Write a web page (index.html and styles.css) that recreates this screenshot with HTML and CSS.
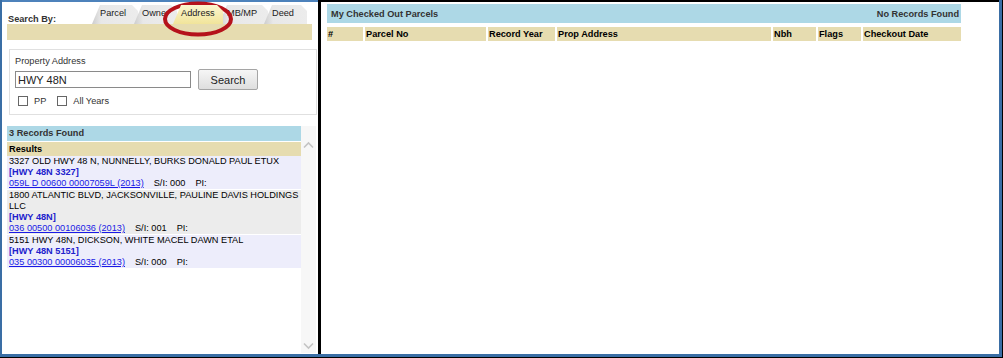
FILE: index.html
```html
<!DOCTYPE html>
<html lang="en">
<head>
    <meta charset="UTF-8">
    <title>Parcel Search</title>
    <link rel="stylesheet" href="styles.css">
</head>
<body>
    <div class="frame">
        <div class="left-panel">
            <div class="search-by">
                <span class="search-label">Search By:</span>
                <div class="tabs">
                    <span class="tab tab-parcel">Parcel</span>
                    <span class="tab tab-owner">Owner</span>
                    <span class="tab tab-address active">Address</span>
                    <span class="tab tab-mbmp">MB/MP</span>
                    <span class="tab tab-deed">Deed</span>
                </div>
            </div>
            <div class="tab-strip"></div>
            <svg class="highlight" width="74" height="38" viewBox="0 0 74 38">
                <ellipse cx="37" cy="19" rx="33" ry="15.5" fill="none" stroke="#b5121b" stroke-width="4"/>
            </svg>

            <div class="search-box">
                <div class="field-label">Property Address</div>
                <div class="search-row">
                    <input type="text" class="address-input" value="HWY 48N">
                    <button class="search-btn">Search</button>
                </div>
                <div class="check-row">
                    <label><input type="checkbox"> PP</label>
                    <label><input type="checkbox"> All Years</label>
                </div>
            </div>

            <div class="results-wrap">
                <div class="results">
                    <div class="count-bar">3 Records Found</div>
                    <div class="results-head">Results</div>
                    <div class="result odd">
                        <div>3327 OLD HWY 48 N, NUNNELLY, BURKS DONALD PAUL ETUX</div>
                        <div class="tag">[HWY 48N 3327]</div>
                        <div><a href="#">059L D 00600 00007059L (2013)</a><span class="meta">S/I: 000</span><span class="meta">PI:</span></div>
                    </div>
                    <div class="result even">
                        <div>1800 ATLANTIC BLVD, JACKSONVILLE, PAULINE DAVIS HOLDINGS LLC</div>
                        <div class="tag">[HWY 48N]</div>
                        <div><a href="#">036 00500 00106036 (2013)</a><span class="meta">S/I: 001</span><span class="meta">PI:</span></div>
                    </div>
                    <div class="result odd">
                        <div>5151 HWY 48N, DICKSON, WHITE MACEL DAWN ETAL</div>
                        <div class="tag">[HWY 48N 5151]</div>
                        <div><a href="#">035 00300 00006035 (2013)</a><span class="meta">S/I: 000</span><span class="meta">PI:</span></div>
                    </div>
                </div>
                <div class="scrollbar">
                    <svg width="11" height="8" viewBox="0 0 11 8"><polyline points="1,6.5 5.5,2 10,6.5" fill="none" stroke="#c4c4c4" stroke-width="1.6"/></svg>
                    <svg width="11" height="8" viewBox="0 0 11 8"><polyline points="1,1.5 5.5,6 10,1.5" fill="none" stroke="#c4c4c4" stroke-width="1.6"/></svg>
                </div>
            </div>
        </div>

        <div class="divider"></div>

        <div class="right-panel">
            <div class="checked-bar">
                <span>My Checked Out Parcels</span>
                <span>No Records Found</span>
            </div>
            <div class="checked-head">
                <span>#</span>
                <span>Parcel No</span>
                <span>Record Year</span>
                <span>Prop Address</span>
                <span>Nbh</span>
                <span>Flags</span>
                <span>Checkout Date</span>
            </div>
        </div>
    </div>
</body>
</html>
```
FILE: styles.css
```css
html {
    background-color: #000;
}
body {
    margin: 0;
    padding: 0;
    font-family: Arial, "Liberation Sans", sans-serif;
    font-size: 9.2px;
    color: #000;
}
.frame {
    width: 1002px;
    height: 357px;
    box-sizing: border-box;
    background-color: #fff;
    border-left: 2px solid #3a6ea5;
    border-right: 3px solid #3a6ea5;
    border-bottom: 3px solid #3a6ea5;
    display: flex;
}
.left-panel {
    position: relative;
    width: 316px;
    border-top: 2px solid #4d82bb;
    display: flex;
    flex-direction: column;
}
.divider {
    width: 3px;
    background-color: #000;
}
.right-panel {
    flex: 1;
    border-top: 2px solid #000;
    padding: 2px 0 0 6px;
}

/* search by tabs */
.search-by {
    display: flex;
    align-items: flex-end;
    padding: 3px 0 0 5px;
    height: 19px;
}
.search-label {
    width: 84px;
    padding-left: 1px;
    font-weight: bold;
    color: #333;
    line-height: 11px;
    margin-bottom: -1px;
}
.tabs {
    display: flex;
    height: 19px;
}
.tab {
    position: relative;
    height: 19px;
    margin-left: -4px;
    padding: 3px 0 0 8px;
    box-sizing: border-box;
    line-height: 11px;
    color: #222;
    white-space: nowrap;
    overflow: hidden;
    background: linear-gradient(to right, #cdcdcd 0, #e8e8e8 9px, #ececec 100%);
    clip-path: polygon(0 100%, 8px 0, calc(100% - 6px) 0, 100% 6px, 100% 100%);
}
.tab-parcel {
    width: 46px;
    margin-left: 0;
}
.tab-owner {
    width: 43px;
}
.tab-address {
    width: 50px;
}
.tab-mbmp {
    width: 49px;
}
.tab-deed {
    width: 43px;
}
.tab.active {
    z-index: 1;
    background: linear-gradient(#fbf6cf, #f1e49a);
}
.tab-strip {
    height: 16px;
    width: 305px;
    margin-left: 5px;
    background-color: #e6dcb0;
}
.highlight {
    position: absolute;
    left: 159px;
    top: -2px;
}

/* search box */
.search-box {
    width: 308px;
    box-sizing: border-box;
    margin: 9px 0 0 7px;
    height: 66px;
    border: 1px solid #e0e0e0;
    padding: 6px 0 0 5px;
}
.field-label {
    color: #333;
    line-height: 11px;
}
.search-row {
    display: flex;
    align-items: center;
    gap: 7px;
    margin-top: 2px;
}
.address-input {
    width: 176px;
    height: 17px;
    box-sizing: border-box;
    border: 1px solid #8a8a8a;
    padding: 0 2px;
    font-family: Arial, "Liberation Sans", sans-serif;
    font-size: 11px;
    color: #222;
}
.search-btn {
    width: 60px;
    height: 21px;
    border: 1px solid #a5a5a5;
    border-radius: 2px;
    background: linear-gradient(#f6f6f6, #dedede);
    font-family: Arial, "Liberation Sans", sans-serif;
    font-size: 11px;
    color: #222;
    padding: 0;
}
.check-row {
    display: flex;
    gap: 11px;
    margin-top: 6px;
    padding-left: 3px;
}
.check-row label {
    display: flex;
    align-items: center;
    gap: 6px;
    color: #333;
}
.check-row input {
    appearance: none;
    margin: 0;
    width: 10px;
    height: 10px;
    border: 1px solid #666;
    background: #fff;
}

/* results */
.results-wrap {
    display: flex;
    margin: 11px 0 0 5px;
    height: 227px;
}
.results {
    width: 294px;
}
.count-bar {
    background-color: #add8e6;
    font-weight: bold;
    color: #333;
    height: 15px;
    line-height: 15px;
    padding-left: 2px;
    margin-bottom: 1px;
}
.results-head {
    background-color: #e6dcb0;
    font-weight: bold;
    height: 14px;
    line-height: 14px;
    padding-left: 2px;
}
.result {
    line-height: 11px;
    padding-left: 2px;
    margin-bottom: 1px;
}
.result.odd {
    background-color: #ededfb;
}
.result.even {
    background-color: #ececec;
}
.result .tag {
    font-weight: bold;
    color: #2121cc;
}
.result a {
    color: #1a1ae6;
}
.result .meta {
    margin-left: 10px;
}
.scrollbar {
    width: 15px;
    background-color: #f7f7f7;
    display: flex;
    flex-direction: column;
    justify-content: space-between;
    align-items: center;
    padding: 15px 0 3px;
    box-sizing: border-box;
}

/* checked out parcels */
.checked-bar {
    width: 634px;
    height: 19px;
    box-sizing: border-box;
    background-color: #add8e6;
    display: flex;
    justify-content: space-between;
    align-items: center;
    padding: 0 2px 0 4px;
    font-weight: bold;
    color: #333;
}
.checked-head {
    display: grid;
    grid-template-columns: 36px 121px 67px 214px 43px 43px 98px;
    column-gap: 2px;
    margin-top: 4px;
    width: 634px;
}
.checked-head span {
    background-color: #e6dcb0;
    font-weight: bold;
    height: 14px;
    line-height: 14px;
    padding-left: 1px;
}
```
